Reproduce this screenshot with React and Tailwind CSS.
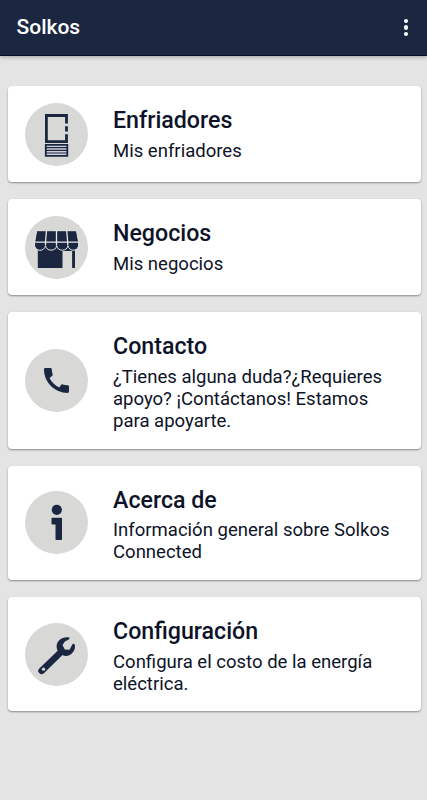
const FridgeIcon = () => (
  <svg viewBox="0 0 63 63" className="h-full w-full" fill="none">
    <path
      d="M41.5 20.5V12.5H21.4v26.2h20.1v-7.5M41.5 23.2v5.3"
      stroke="#1b2741"
      strokeWidth="2.8"
    />
    <path d="M20.8 41.8h21.5v11h-21.5z" fill="#cfd0d8" stroke="#1b2741" strokeWidth="1.8" />
    <path d="M20 44.6h23M20 47.3h23M20 50h23" stroke="#1b2741" strokeWidth="1.2" />
  </svg>
);

const StoreIcon = () => (
  <svg viewBox="0 0 63 63" className="h-full w-full" fill="#1b2741">
    <path d="M12.8 27h36.8v5.5h.4V52h-2.9V35H37.5v17H12.8z" />
    <path
      d="M11.7 14.7H51.5l2.2 11.8v1.5a5.4 5.4 0 0 1-10.8 1.6 5.7 5.6 0 0 1-11.2 0 5.7 5.6 0 0 1-11.2 0A5.4 5.4 0 0 1 9.5 28v-1.5z"
      stroke="#e8e8e7"
      strokeWidth="1"
    />
    <path
      d="M9 26.1h45M21.5 14.7l-1 11.4v3M31.5 14.7v14.6M41.7 14.7l1 11.4v3"
      fill="none"
      stroke="#e8e8e7"
      strokeWidth="1.3"
    />
  </svg>
);

const PhoneIcon = () => (
  <svg viewBox="0 0 63 63" className="h-full w-full" fill="#1b2741">
    <path
      transform="translate(14.8 14.8) scale(1.39)"
      d="M20.01 15.38c-1.23 0-2.42-.2-3.53-.56-.35-.12-.74-.03-1.01.24l-1.57 1.97c-2.83-1.35-5.48-3.9-6.89-6.83l1.95-1.66c.27-.28.35-.67.24-1.02-.37-1.11-.56-2.3-.56-3.53 0-.54-.45-.99-.99-.99H4.19C3.65 3 3 3.24 3 3.99 3 13.28 10.73 21 20.01 21c.71 0 .99-.63.99-1.18v-3.45c0-.54-.45-.99-.99-.99z"
    />
  </svg>
);

const InfoIcon = () => (
  <svg viewBox="0 0 63 63" className="h-full w-full" fill="#1b2741">
    <circle cx="31.8" cy="18.8" r="5.1" />
    <path d="M27.3 26.7h8.9q.8 0 .8.8v20.7q0 .8-.8.8h-4.9q-.8 0-.8-.8V33.5h-3.2q-.8 0-.8-.8v-5.2q0-.8.8-.8z" />
  </svg>
);

const WrenchIcon = () => (
  <svg viewBox="0 0 63 63" className="h-full w-full" fill="none">
    <path d="M16.6 47.8 36 29" stroke="#1b2741" strokeWidth="6.6" strokeLinecap="round" />
    <path
      d="M43.6 14.3c-6.2-1-12.2 3.4-12 9.2.2 5.2 4.3 9.3 9.3 9.4 5.4 0 9.7-5.3 9-10.7-.3-1.6-1.8-2-2.6-.8l-2.8 5.3-4.7-.2-2.3-4.6 2.4-3.5 3.8-1.9c1.3-.7 1.1-1.9-.1-2.2z"
      fill="#1b2741"
    />
    <circle cx="18.5" cy="46.2" r="1.6" fill="#d8d8d7" />
  </svg>
);

const menuItems = [
  { title: "Enfriadores", text: "Mis enfriadores", Icon: FridgeIcon },
  { title: "Negocios", text: "Mis negocios", Icon: StoreIcon },
  {
    title: "Contacto",
    text: "¿Tienes alguna duda?¿Requieres apoyo? ¡Contáctanos! Estamos para apoyarte.",
    Icon: PhoneIcon,
  },
  {
    title: "Acerca de",
    text: "Información general sobre Solkos Connected",
    Icon: InfoIcon,
  },
  {
    title: "Configuración",
    text: "Configura el costo de la energía eléctrica.",
    Icon: WrenchIcon,
  },
];

export default function App() {
  return (
    <div className="min-h-screen bg-[#e4e4e4] font-['Roboto',sans-serif] text-[#0d1328]">
      <header className="flex h-14 items-center justify-between border-b border-[#07102b] bg-[#1b2741] pr-[19px] pl-[16.5px] shadow-[0_1px_4px_rgba(0,0,0,0.3)]">
        <h1 className="text-[21px] font-medium text-white">Solkos</h1>
        <button type="button" aria-label="Menú" className="flex flex-col gap-[2px]">
          <span className="h-[4.3px] w-[4.3px] rounded-full bg-white" />
          <span className="h-[4.3px] w-[4.3px] rounded-full bg-white" />
          <span className="h-[4.3px] w-[4.3px] rounded-full bg-white" />
        </button>
      </header>

      <main className="flex flex-col gap-[17px] pt-[30.3px] pr-[6px] pl-[8px]">
        {menuItems.map(({ title, text, Icon }) => (
          <button
            key={title}
            type="button"
            className="flex rounded-[4px] bg-white py-[16.5px] pr-5 pl-[17px] text-left shadow-[0_1px_2px_rgba(0,0,0,0.4)]"
          >
            <span className="h-[63px] w-[63px] shrink-0 self-center rounded-full bg-[#d8d8d7]">
              <Icon />
            </span>
            <span className="ml-[25px] flex flex-1 flex-col">
              <span className="mt-[3.6px] text-[23.2px] leading-[28px] font-medium">{title}</span>
              <span className="mt-[5.7px] text-[18.55px] leading-[22px]">{text}</span>
            </span>
          </button>
        ))}
      </main>
    </div>
  );
}
